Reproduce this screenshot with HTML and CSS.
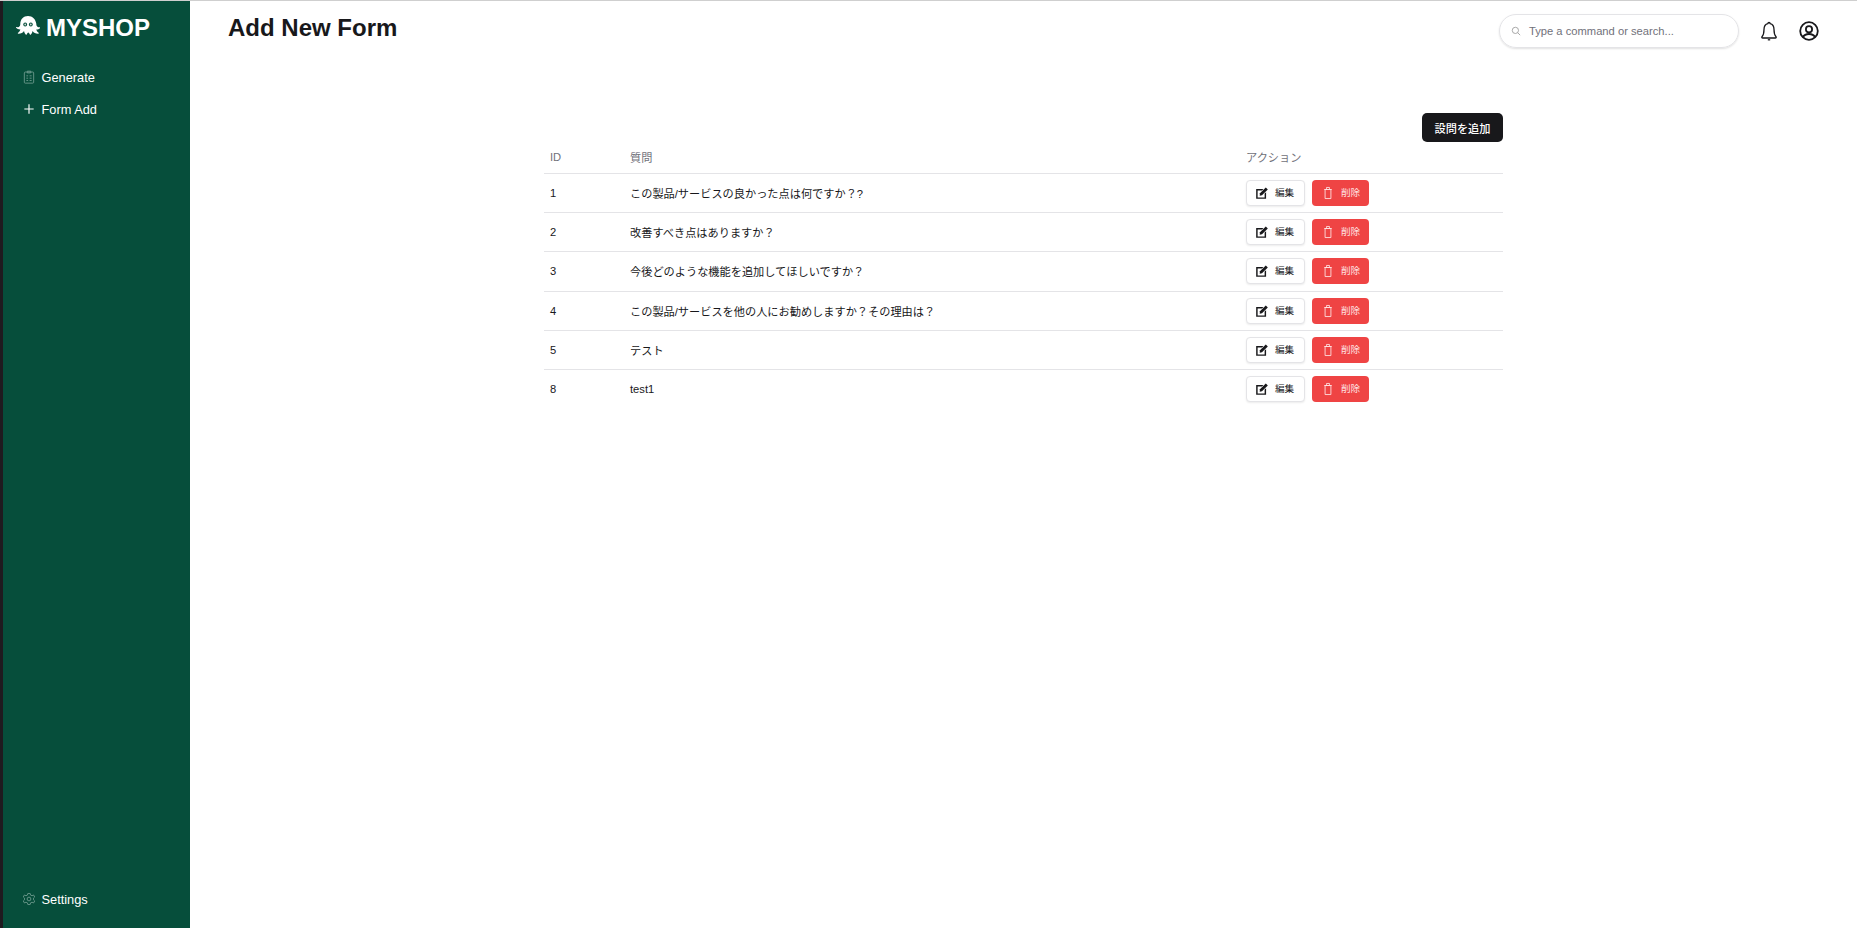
FILE: index.html
```html
<!DOCTYPE html>
<html lang="ja">
<head>
    <meta charset="UTF-8">
    <title>Add New Form</title>
    <link rel="stylesheet" href="styles.css">
</head>
<body>
    <div class="app">
        <aside class="sidebar">
            <div class="brand">
                <svg class="brand-icon" viewBox="0 0 24 19" fill="#fff">
                    <path d="M12 0C7.500 0 4.300 3.300 4.300 7.800c0 1.500-.4 2.600-1.400 3.100-.8.400-1.700.400-2.400.200-.4-.1-.6.400-.3.700 1 1.200 2.500 1.800 4.200 1.700-.5 1.500-1.300 2.600-2.400 3.300-.4.300-.2.900.3.900 2.500.1 4.600-1 5.700-2.800.3 1.500.8 2.700 1.700 3.700.3.300.7.300 1-.1.600-.9 1.100-1.900 1.600-1.900s1 1 1.600 1.900c.3.400.7.400 1 .1.900-1 1.400-2.200 1.700-3.700 1.100 1.800 3.200 2.900 5.700 2.800.5 0 .7-.6.300-.9-1.100-.7-1.900-1.800-2.400-3.300 1.700.1 3.200-.5 4.200-1.700.3-.3.100-.8-.3-.7-.7.200-1.600.200-2.400-.200-1-.5-1.400-1.600-1.400-3.100C19.700 3.300 16.500 0 12 0z"/>
                    <circle cx="9.200" cy="8.500" r="1.900" fill="#064e3b"/>
                    <circle cx="14.800" cy="8.500" r="1.900" fill="#064e3b"/>
                    <circle cx="9.200" cy="8.500" r=".9" fill="#cfd8d5"/>
                    <circle cx="14.800" cy="8.500" r=".9" fill="#cfd8d5"/>
                </svg>
                <span>MYSHOP</span>
            </div>
            <nav class="side-nav">
                <a class="side-link">
                    <svg class="side-icon dim" viewBox="0 0 24 24" fill="none" stroke="currentColor" stroke-width="1.500">
                        <rect x="4" y="3.500" width="16" height="19" rx="1.500"/>
                        <path d="M9 2h6v3H9zM7.500 10h3M13 10h3.500M7.500 14h3M13 14h3.500M7.500 18h3M13 18h3.500"/>
                    </svg>
                    Generate
                </a>
                <a class="side-link">
                    <svg class="side-icon" viewBox="0 0 24 24" fill="none" stroke="currentColor" stroke-width="2">
                        <path d="M12 4v16M4 12h16"/>
                    </svg>
                    Form Add
                </a>
            </nav>
            <a class="side-link side-bottom">
                <svg class="side-icon dim" viewBox="0 0 24 24" fill="none" stroke="currentColor" stroke-width="1.500">
                    <path d="M10 2.500h4l.7 2.800 2.500 1.100 2.600-1.300 2 3.400-2.100 2 0 2.900 2.100 2-2 3.400-2.600-1.300-2.500 1.100-.7 2.900h-4l-.7-2.900-2.500-1.100-2.600 1.300-2-3.400 2.100-2 0-2.900-2.100-2 2-3.400 2.600 1.300 2.500-1.100z"/>
                    <circle cx="12" cy="12" r="3.200"/>
                </svg>
                Settings
            </a>
        </aside>
        <div class="main">
            <header class="topbar">
                <h1>Add New Form</h1>
                <div class="top-right">
                    <div class="search">
                        <svg class="search-icon" viewBox="0 0 24 24" fill="none" stroke="currentColor" stroke-width="2">
                            <circle cx="10.500" cy="10.500" r="7.500"/>
                            <path d="M16 16l6 6"/>
                        </svg>
                        <span>Type a command or search...</span>
                    </div>
                    <svg class="top-icon" viewBox="0 0 20 20" fill="none" stroke="currentColor" stroke-width="1.300">
                        <path d="M10 1.500c-.7 0-1.100.5-1.100 1.100C6.200 3.200 5 5.500 5 8.500c0 4-.8 5.900-2 7.200-.5.700-.1 1.300.7 1.300h12.600c.8 0 1.200-.6.700-1.300-1.200-1.300-2-3.200-2-7.200 0-3-1.200-5.300-3.900-5.900 0-.6-.4-1.100-1.100-1.100z"/>
                        <path d="M8.800 18.800h2.400"/>
                    </svg>
                    <svg class="top-icon" viewBox="0 0 20 20" fill="none" stroke="currentColor" stroke-width="1.800">
                        <circle cx="10" cy="10" r="8.800"/>
                        <circle cx="10" cy="8.300" r="3.100"/>
                        <path d="M4 16.200c1-2.100 3.200-3.200 6-3.200s5 1.100 6 3.200"/>
                    </svg>
                </div>
            </header>
            <section class="content">
                <div class="add-row">
                    <button class="add-btn">設問を追加</button>
                </div>
                <table class="question-table">
                    <thead>
                        <tr><th class="col-id">ID</th><th class="col-q">質問</th><th>アクション</th></tr>
                    </thead>
                    <tbody>
                        <tr>
                            <td>1</td><td>この製品/サービスの良かった点は何ですか？?</td>
                            <td><div class="actions">
                                <button class="btn btn-edit"><svg class="btn-icon" viewBox="0 0 24 24" fill="currentColor"><path d="M2 5h12.500l-2.500 2.500H4.500v12h12V13l2.500-2.500V22H2z"/><path d="M8.500 12.500L18.500 2.500l3.500 3.500-10 10-4 .6z"/></svg><span class="btn-text">編集</span></button>
                                <button class="btn btn-del"><svg class="btn-icon" viewBox="0 0 24 24" fill="none" stroke="currentColor" stroke-width="1.500"><path d="M7 6h10v15.500H7zM5.500 6h13M9.500 5V2.500h5V5"/></svg><span class="btn-text">削除</span></button>
                            </div></td>
                        </tr>
                        <tr>
                            <td>2</td><td>改善すべき点はありますか？</td>
                            <td><div class="actions">
                                <button class="btn btn-edit"><svg class="btn-icon" viewBox="0 0 24 24" fill="currentColor"><path d="M2 5h12.500l-2.500 2.500H4.500v12h12V13l2.500-2.500V22H2z"/><path d="M8.500 12.500L18.500 2.500l3.500 3.500-10 10-4 .6z"/></svg><span class="btn-text">編集</span></button>
                                <button class="btn btn-del"><svg class="btn-icon" viewBox="0 0 24 24" fill="none" stroke="currentColor" stroke-width="1.500"><path d="M7 6h10v15.500H7zM5.500 6h13M9.500 5V2.500h5V5"/></svg><span class="btn-text">削除</span></button>
                            </div></td>
                        </tr>
                        <tr>
                            <td>3</td><td>今後どのような機能を追加してほしいですか？</td>
                            <td><div class="actions">
                                <button class="btn btn-edit"><svg class="btn-icon" viewBox="0 0 24 24" fill="currentColor"><path d="M2 5h12.500l-2.500 2.500H4.500v12h12V13l2.500-2.500V22H2z"/><path d="M8.500 12.500L18.500 2.500l3.500 3.500-10 10-4 .6z"/></svg><span class="btn-text">編集</span></button>
                                <button class="btn btn-del"><svg class="btn-icon" viewBox="0 0 24 24" fill="none" stroke="currentColor" stroke-width="1.500"><path d="M7 6h10v15.500H7zM5.500 6h13M9.500 5V2.500h5V5"/></svg><span class="btn-text">削除</span></button>
                            </div></td>
                        </tr>
                        <tr>
                            <td>4</td><td>この製品/サービスを他の人にお勧めしますか？その理由は？</td>
                            <td><div class="actions">
                                <button class="btn btn-edit"><svg class="btn-icon" viewBox="0 0 24 24" fill="currentColor"><path d="M2 5h12.500l-2.500 2.500H4.500v12h12V13l2.500-2.500V22H2z"/><path d="M8.500 12.500L18.500 2.500l3.500 3.500-10 10-4 .6z"/></svg><span class="btn-text">編集</span></button>
                                <button class="btn btn-del"><svg class="btn-icon" viewBox="0 0 24 24" fill="none" stroke="currentColor" stroke-width="1.500"><path d="M7 6h10v15.500H7zM5.500 6h13M9.500 5V2.500h5V5"/></svg><span class="btn-text">削除</span></button>
                            </div></td>
                        </tr>
                        <tr>
                            <td>5</td><td>テスト</td>
                            <td><div class="actions">
                                <button class="btn btn-edit"><svg class="btn-icon" viewBox="0 0 24 24" fill="currentColor"><path d="M2 5h12.500l-2.500 2.500H4.500v12h12V13l2.500-2.500V22H2z"/><path d="M8.500 12.500L18.500 2.500l3.500 3.500-10 10-4 .6z"/></svg><span class="btn-text">編集</span></button>
                                <button class="btn btn-del"><svg class="btn-icon" viewBox="0 0 24 24" fill="none" stroke="currentColor" stroke-width="1.500"><path d="M7 6h10v15.500H7zM5.500 6h13M9.500 5V2.500h5V5"/></svg><span class="btn-text">削除</span></button>
                            </div></td>
                        </tr>
                        <tr>
                            <td>8</td><td>test1</td>
                            <td><div class="actions">
                                <button class="btn btn-edit"><svg class="btn-icon" viewBox="0 0 24 24" fill="currentColor"><path d="M2 5h12.500l-2.500 2.500H4.500v12h12V13l2.500-2.500V22H2z"/><path d="M8.500 12.500L18.500 2.500l3.500 3.500-10 10-4 .6z"/></svg><span class="btn-text">編集</span></button>
                                <button class="btn btn-del"><svg class="btn-icon" viewBox="0 0 24 24" fill="none" stroke="currentColor" stroke-width="1.500"><path d="M7 6h10v15.500H7zM5.500 6h13M9.500 5V2.500h5V5"/></svg><span class="btn-text">削除</span></button>
                            </div></td>
                        </tr>
                    </tbody>
                </table>
            </section>
        </div>
    </div>
</body>
</html>
```

FILE: styles.css
```css
* {
    box-sizing: border-box;
}

html, body {
    height: 100%;
}

body {
    margin: 0;
    overflow: hidden;
    background-color: #fff;
    color: #18181b;
    font-family: "Liberation Sans", "Noto Sans CJK JP", sans-serif;
}

.app {
    display: flex;
    height: 100%;
    border-top: 1px solid #cfcfcf;
}

/* Sidebar */
.sidebar {
    display: flex;
    flex-direction: column;
    width: 190px;
    flex-shrink: 0;
    background-color: #064e3b;
    border-left: 3px solid #1f1a1f;
    color: #fff;
}

.brand {
    display: flex;
    align-items: center;
    gap: 6px;
    padding: 13px 0 0 13px;
    font-size: 24px;
    font-weight: 700;
    line-height: 28px;
}

.brand-icon {
    width: 24px;
    height: 19px;
    margin-top: -6px;
}

.side-nav {
    display: flex;
    flex-direction: column;
    margin-top: 19px;
    flex: 1;
}

.side-link {
    display: flex;
    align-items: center;
    gap: 5.500px;
    height: 32px;
    padding-left: 19px;
    font-size: 12.800px;
}

.side-bottom {
    margin-bottom: 13px;
}

.side-icon {
    width: 14px;
    height: 14px;
    flex-shrink: 0;
}

.dim {
    color: #6f9c8f;
}

/* Top bar */
.main {
    flex: 1;
    min-width: 0;
}

.topbar {
    display: flex;
    justify-content: space-between;
    padding: 0 38px;
}

.topbar h1 {
    margin: 12px 0 0;
    font-size: 24px;
    line-height: 30px;
    font-weight: 700;
}

.top-right {
    display: flex;
    align-items: center;
    gap: 20px;
    padding-top: 13px;
}

.search {
    display: flex;
    align-items: center;
    gap: 8px;
    width: 240px;
    height: 34px;
    padding-left: 11px;
    border: 1px solid #e4e4e7;
    border-radius: 17px;
    box-shadow: 0 1px 2px rgba(0, 0, 0, 0.12);
    font-size: 11.200px;
    color: #71717a;
}

.search-icon {
    width: 10px;
    height: 10px;
    color: #999;
}

.top-icon {
    width: 20px;
    height: 20px;
    color: #18181b;
}

/* Table */
.content {
    width: 959px;
    margin: 65px 0 0 354px;
}

.add-row {
    display: flex;
    justify-content: flex-end;
}

.add-btn {
    height: 29px;
    padding: 0 12.500px;
    border: none;
    border-radius: 5px;
    background-color: #18181b;
    color: #fff;
    font-family: inherit;
    font-size: 11.200px;
    font-weight: 500;
}

.question-table {
    width: 100%;
    border-collapse: collapse;
    font-size: 11.200px;
}

.question-table th {
    height: 31.500px;
    padding: 0 6px 2px;
    text-align: left;
    font-weight: 400;
    color: #71717a;
}

.question-table tr {
    border-bottom: 1px solid #e4e4e7;
}

.question-table tbody tr:last-child {
    border-bottom: none;
}

.question-table td {
    height: 39.200px;
    padding: 0 6px;
}

.col-id {
    width: 80px;
}

.col-q {
    width: 616px;
}

.actions {
    display: flex;
    gap: 7px;
}

.btn {
    display: flex;
    align-items: center;
    justify-content: center;
    gap: 6px;
    height: 26px;
    padding: 0;
    border-radius: 4px;
    font-family: inherit;
    font-size: 9.600px;
}

.btn-text {
    margin-bottom: 2px;
}

.btn-icon {
    width: 14px;
    height: 14px;
}

.btn-edit {
    width: 59px;
    padding-right: 2px;
    border: 1px solid #e4e4e7;
    background-color: #fff;
    color: #18181b;
    box-shadow: 0 1px 2px rgba(0, 0, 0, 0.08);
}

.btn-del {
    width: 57px;
    border: none;
    background-color: #ef4444;
    color: #fee2e2;
}
```
